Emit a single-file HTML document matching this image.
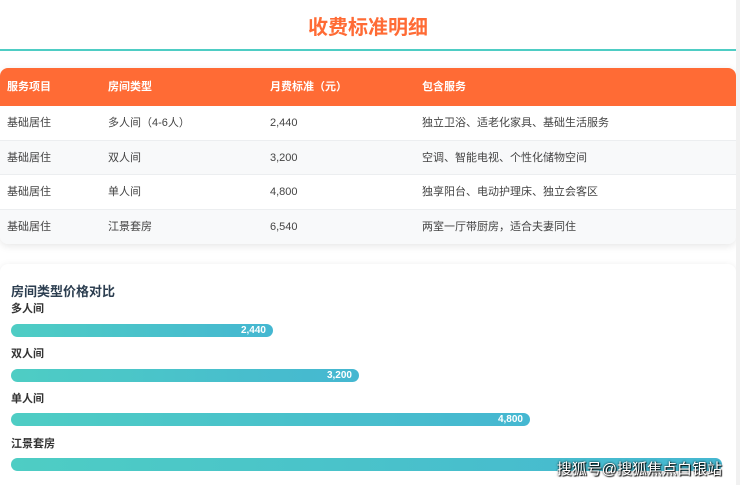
<!DOCTYPE html>
<html><head><meta charset="utf-8"><style>
*{margin:0;padding:0;box-sizing:border-box}
html,body{width:740px;height:485px;overflow:hidden}
body{background:#fff;font-family:"Liberation Sans","Noto Sans CJK SC",sans-serif;position:relative}
.title{position:absolute;top:14px;left:0;width:736px;text-align:center;color:#ff6b35;font-size:20px;font-weight:bold;line-height:28px}
.line{position:absolute;top:49px;left:0;width:736px;height:2px;background:#4ecdc4}
.card{position:absolute;left:0;width:736px;background:#fff;border-radius:8px;box-shadow:0 2px 8px rgba(0,0,0,.1);overflow:hidden}
.row{height:34.5px;position:relative;font-size:11px;color:#444;border-bottom:1px solid #eceef0}
.row span{position:absolute;top:0;line-height:35px}
.hd{height:38px;background:#ff6b35;color:#fff;font-weight:bold;font-size:11px;border-bottom:0}
.hd span{line-height:38px}
.alt{background:#f8f9fa}
.c1{left:7px}.c2{left:108px}.c3{left:270px}.c4{left:422px}
.ct{position:absolute;left:11px;font-size:13px;font-weight:bold;color:#2c3e50}
.lb{position:absolute;left:11px;font-size:11px;font-weight:bold;color:#333}
.bar{position:absolute;left:11px;height:13px;border-radius:7px;background:linear-gradient(90deg,#4ecdc4,#45b7d1);color:#fff;font-size:10px;font-weight:bold;text-align:right;padding-right:7px;line-height:13px}
.sb{position:absolute;right:0;top:0;width:4px;height:485px;background:#f1f1f1}
.wm{position:absolute;right:18px;top:458px;color:#fff;font-size:15px;text-shadow:1px 1px 1px #000,0 0 2px #000}
</style></head><body>
<div class="title">收费标准明细</div>
<div class="line"></div>
<div class="card" style="top:68px;height:176px">
<div class="row hd"><span class="c1">服务项目</span><span class="c2">房间类型</span><span class="c3">月费标准（元）</span><span class="c4">包含服务</span></div>
<div class="row"><span class="c1">基础居住</span><span class="c2">多人间（4-6人）</span><span class="c3">2,440</span><span class="c4">独立卫浴、适老化家具、基础生活服务</span></div>
<div class="row alt"><span class="c1">基础居住</span><span class="c2">双人间</span><span class="c3">3,200</span><span class="c4">空调、智能电视、个性化储物空间</span></div>
<div class="row"><span class="c1">基础居住</span><span class="c2">单人间</span><span class="c3">4,800</span><span class="c4">独享阳台、电动护理床、独立会客区</span></div>
<div class="row alt" style="border-bottom:0"><span class="c1">基础居住</span><span class="c2">江景套房</span><span class="c3">6,540</span><span class="c4">两室一厅带厨房，适合夫妻同住</span></div>
</div>
<div class="card" style="top:264px;height:230px"></div>
<div class="ct" style="top:281px">房间类型价格对比</div>
<div class="lb" style="top:300px">多人间</div>
<div class="bar" style="top:324px;width:262px">2,440</div>
<div class="lb" style="top:345px">双人间</div>
<div class="bar" style="top:369px;width:348px">3,200</div>
<div class="lb" style="top:390px">单人间</div>
<div class="bar" style="top:413px;width:519px">4,800</div>
<div class="lb" style="top:435px">江景套房</div>
<div class="bar" style="top:458px;width:711px"></div>
<div class="sb"></div>
<div class="wm">搜狐号@搜狐焦点白银站</div>
</body></html>
